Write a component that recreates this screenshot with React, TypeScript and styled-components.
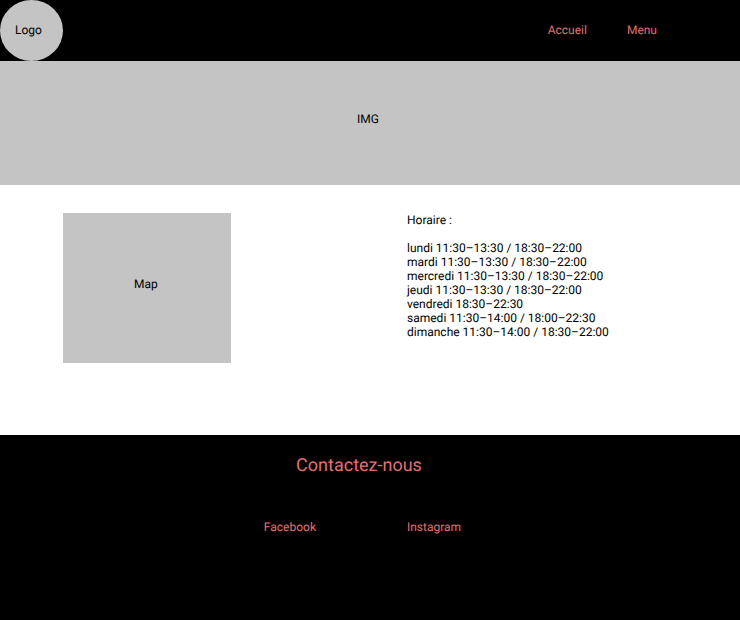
import React from "react";
import styled, { createGlobalStyle } from "styled-components";

const GlobalStyle = createGlobalStyle`
  *, *::before, *::after { box-sizing: border-box; }
  html, body, #root { height: 100%; }
  body {
    margin: 0;
    background: #fff;
    color: #000;
    font-family: Roboto, sans-serif;
    font-size: 12px;
    line-height: 14px;
    text-rendering: geometricPrecision;
  }
`;

const Page = styled.div`
  min-height: 100%;
  display: flex;
  flex-direction: column;
`;

const Header = styled.header`
  display: flex;
  justify-content: space-between;
  align-items: flex-start;
  padding-right: 83px;
  background: #000;
`;

const Logo = styled.div`
  width: 63px;
  height: 61px;
  padding: 23px 15px;
  border-radius: 50%;
  background: #c4c4c4;
`;

const Nav = styled.nav`
  display: flex;
  gap: 40px;
  padding-top: 23px;
`;

const Link = styled.a`
  color: #e07070;
  text-decoration: none;
`;

const Banner = styled.section`
  padding: 51px 4px 59px 0;
  background: #c4c4c4;
  text-align: center;
`;

const Main = styled.main`
  display: grid;
  grid-template-columns: 55% 45%;
  padding: 28px 0 72px;
`;

const MapBox = styled.div`
  width: 168px;
  height: 150px;
  margin-left: 63px;
  padding: 64px 71px;
  background: #c4c4c4;
`;

const Title = styled.h2`
  margin: 0 0 14px;
  font-size: 12px;
  font-weight: 400;
`;

const Hours = styled.ul`
  margin: 0;
  padding: 0;
  list-style: none;
`;

const Footer = styled.footer`
  flex: 1;
  padding-top: 20px;
  background: #000;
`;

const Contact = styled.h2`
  margin: 0 0 44px;
  padding-right: 22px;
  color: #e07070;
  font-size: 18px;
  font-weight: 400;
  line-height: 21px;
  text-align: center;
`;

const Socials = styled.div`
  display: flex;
  justify-content: center;
  gap: 91px;
  padding-right: 15px;
`;

const schedule = [
  "lundi 11:30–13:30 / 18:30–22:00",
  "mardi 11:30–13:30 / 18:30–22:00",
  "mercredi 11:30–13:30 / 18:30–22:00",
  "jeudi 11:30–13:30 / 18:30–22:00",
  "vendredi 18:30–22:30",
  "samedi 11:30–14:00 / 18:00–22:30",
  "dimanche 11:30–14:00 / 18:30–22:00",
];

export default function App() {
  return (
    <>
      <GlobalStyle />
      <Page>
        <Header>
          <Logo>Logo</Logo>
          <Nav>
            <Link href="#accueil">Accueil</Link>
            <Link href="#menu">Menu</Link>
          </Nav>
        </Header>
        <Banner>IMG</Banner>
        <Main>
          <MapBox>Map</MapBox>
          <section>
            <Title>Horaire :</Title>
            <Hours>
              {schedule.map((line) => (
                <li key={line}>{line}</li>
              ))}
            </Hours>
          </section>
        </Main>
        <Footer>
          <Contact>Contactez-nous</Contact>
          <Socials>
            <Link href="#facebook">Facebook</Link>
            <Link href="#instagram">Instagram</Link>
          </Socials>
        </Footer>
      </Page>
    </>
  );
}
